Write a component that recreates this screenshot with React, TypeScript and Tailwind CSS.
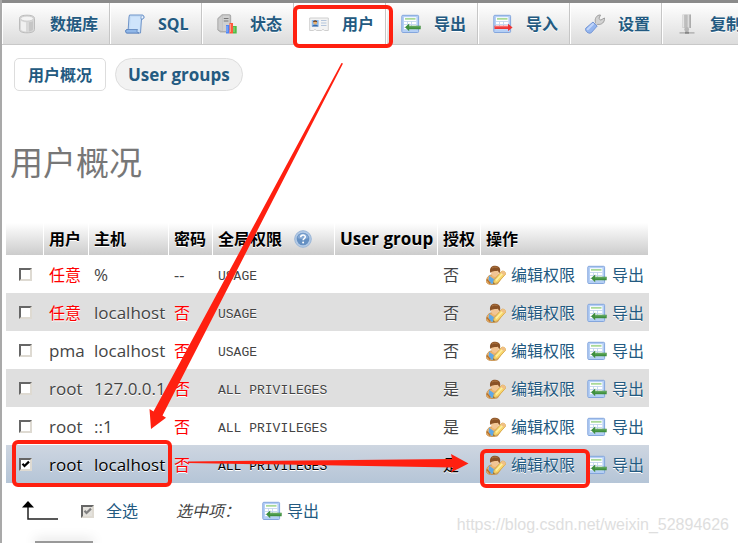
import type { ReactNode } from 'react'
import clsx from 'clsx'

const DatabaseIcon = () => (
  <svg viewBox="0 0 20 20" className="size-5 shrink-0">
    <path d="M2.500 4.500C2.500 2 6 1.200 10 1.200s7.500.8 7.500 3.300v11c0 2.500-3.500 3.300-7.500 3.300s-7.500-.8-7.500-3.300z" fill="#d8d8d8" stroke="#bcbcbc" />
    <path d="M4 7c2 1 4 1.200 5 1.200V17.500C7 17.400 4.800 17 4 15.500z" fill="#f0f0f0" />
    <path d="M12 8.200c2-.2 3.500-.6 4-1.200v8.500c-.5 1-2.200 1.700-4 1.900z" fill="#c6c6c6" />
    <ellipse cx="10" cy="4.600" rx="6.300" ry="2.500" fill="#f4f4f4" stroke="#c6c6c6" strokeWidth=".7" />
  </svg>
)

const SqlIcon = () => (
  <svg viewBox="0 0 20 20" className="size-5 shrink-0">
    <path d="M4.500 1h13c1.700 0 2.200 3.800.3 4h-1.300l-1 14H2C0 19 .2 15.500 2 15.500h1.200L4 3z" fill="#c5ddf7" stroke="#6f94c8" />
    <path d="M6 3h9.500l-1 12.500H5z" fill="#cfe4fb" />
    <path d="M2 15.500h10.500c-1 1.500-.5 3.500 1.500 3.500H2C.2 19 .2 15.500 2 15.500z" fill="#90b7e8" stroke="#5b82bb" strokeWidth=".8" />
    <path d="M16 5V3c0-1.500 2.500-2 2.800 0 .2 1.500-.8 2-2.800 2z" fill="#eef6ff" stroke="#6f94c8" strokeWidth=".8" />
  </svg>
)

const StatusIcon = () => (
  <svg viewBox="0 0 20 20" className="size-5 shrink-0">
    <path d="M.8 4.500L5 .7h7.500c.8 0 1.200.5 1.200 1.300v13L9 18H3.500L.8 16z" fill="#b8b8b8" stroke="#9a9a9a" strokeWidth=".7" />
    <path d="M5.500 1.500h7v12.500l-3 3h-4z" fill="#d0d0d0" />
    <path d="M6.800 4.500h4.700M6.800 7h4.700" stroke="#777" strokeWidth="1.200" />
    <path d="M1.500 5L5 2v15l-3.500-1.500z" fill="#cccccc" />
    <path d="M9 11h3.500v8.500H9z" fill="#4f86f5" />
    <path d="M12.500 9H16v10.500h-3.500z" fill="#ff593c" />
    <path d="M16 12h3.700v7.500H16z" fill="#51bd46" />
    <path d="M10 12v6M13.500 10v8M17 13v5" stroke="#fff" strokeOpacity=".4" />
  </svg>
)

const UsersIcon = () => (
  <svg viewBox="0 0 20 20" className="size-5 shrink-0">
    <path d="M.7 4h18.600v12.500h-3.800L14 15.300l-1.500 1.200h-5L6 15.300l-1.500 1.200H.7z" fill="#f3f3f3" stroke="#cfcfcf" />
    <path d="M2.700 6h7v6.500h-7z" fill="#8bbcf1" />
    <circle cx="6.200" cy="8.800" r="1.900" fill="#e9b16f" />
    <path d="M4 8.300c-.2-2.800 4.500-2.800 4.300 0-1.200-.8-3-.8-4.300 0z" fill="#70411f" />
    <path d="M3 12.500c.5-2.200 6-2.200 6.400 0z" fill="#3868a8" />
    <path d="M12 6.500h5.500M12 9h5.500M12 11.500h5.500" stroke="#b4c5dc" strokeWidth="1.200" />
  </svg>
)

const SheetIcon = ({ children }: { children: ReactNode }) => (
  <svg viewBox="0 0 20 20" className="size-5 shrink-0">
    <rect x=".8" y="1.300" width="16.800" height="17.200" rx="1" fill="#b4cff5" stroke="#84a6dd" />
    <path d="M3 3.200h12.400v12H3z" fill="#fff" />
    <path d="M4 4.900h10.500" stroke="#8ccc75" strokeWidth="1.300" />
    <path d="M3 7.500h12.400M3 10.500h12.400M3 13.500h12.400M6.500 7v8.200M10.500 7v8.200" stroke="#c3d6ee" strokeWidth=".9" />
    {children}
  </svg>
)

const ExportIcon = () => (
  <SheetIcon>
    <path d="M4 13.300l4.200-3.800v2.200h11.500v3.500H8.200v2z" fill="#3f8f3e" />
    <path d="M8 12.800h11" stroke="#74b56f" strokeWidth=".9" />
  </SheetIcon>
)

const ImportIcon = () => (
  <SheetIcon>
    <path d="M1.500 11.700h13.500V9.700l4.600 3.700-4.600 3.600v-2H1.500z" fill="#ee3434" />
    <path d="M2 12.700h13" stroke="#ff8c8c" strokeWidth=".8" />
  </SheetIcon>
)

const SettingsIcon = () => (
  <svg viewBox="0 0 20 20" className="size-5 shrink-0">
    <path d="M10.500 8.500C9.300 5 11.500.7 15.500 1l-1.500 3.200 1.500 2L19.500 4c.5 4-3 7.200-6.800 6.300l-2 2-2-2z" fill="#d2d2d2" stroke="#969696" strokeWidth=".9" />
    <path d="M8 8l4.200 4-6 6.800C3.400 20.300-.3 17 .7 14.300z" fill="#94b5ee" stroke="#6b8fd2" strokeWidth=".9" />
    <path d="M8 10l-5.300 5.300" stroke="#c1d5fa" strokeWidth="2" strokeLinecap="round" />
  </svg>
)

const ReplicationIcon = () => (
  <svg viewBox="0 0 20 20" className="size-5 shrink-0">
    <path d="M5.500.5h3v13.500h-3zM9.500.5h4v13.500h-4z" fill="#c2c2c2" />
    <path d="M6.500.5v13M11.300.5v13.500" stroke="#e4e4e4" />
    <path d="M9 .5v13M13.300.5v13.500" stroke="#a2a2a2" />
    <circle cx="9.700" cy="15.500" r="2.400" fill="#b6b6b6" />
    <path d="M2.500 18h15v1.700h-15z" fill="#b8b8b8" />
    <path d="M8 17.700h4v2H8z" fill="#858585" />
  </svg>
)

const EditUserIcon = () => (
  <svg viewBox="0 0 20 20" className="size-5 shrink-0">
    <path d="M.5 16.500C.5 12.500 2.500 10 6.500 9.700h5c2 .5 3 2 3.500 4l-3.500 5.200C7 20 .5 20 .5 16.500z" fill="#eeb36b" stroke="#c08a48" strokeWidth=".8" />
    <path d="M3.200 10.700l4.800 3.600 4-3.300 1.500 3-3.500 4.800H5L2.500 15z" fill="#5fa8e6" />
    <path d="M.8 14.500l3.500 4" stroke="#b5702a" strokeWidth="1.300" />
    <path d="M5 7c0 6.500 8 6.500 8 0V5.500H5z" fill="#f2c594" />
    <path d="M4.300 8C2.900 2 6.500.6 9.300.7c4.700.2 5.700 3.700 4.500 7.300-1.300-.5-1.800-2.200-1.800-2.200C9.500 6.300 5.800 5.800 4.300 8z" fill="#8a5226" />
    <path d="M6 3c1.500-1.200 4-1.200 5.500-.4" fill="none" stroke="#b27a45" />
    <path d="M7.200 18.900l1-4.200 7.300-8.200c1.500-1.300 5 .9 3.900 2.900l-7.600 8.300z" fill="#f7d76d" stroke="#d9a648" strokeWidth=".9" />
    <path d="M10 15.500l6.500-7" stroke="#fff0a3" strokeWidth="1.500" />
    <path d="M15.700 6.500c1.500-1.300 4.700.8 3.700 2.600l-1.200 1.300-3.600-2.800z" fill="#f0bf86" />
    <path d="M7.200 18.900l.5-1.600 1.100 1z" fill="#564227" />
  </svg>
)

const HelpIcon = () => (
  <svg viewBox="0 0 18 18" className="size-[18px] shrink-0">
    <circle cx="9" cy="9" r="8.300" fill="#b3cae6" stroke="#9ab6d8" />
    <circle cx="9" cy="9" r="6.300" fill="#6590c2" />
    <path d="M3.500 8a5.600 5.600 0 0 1 11 0c-3 1.500-8 1.500-11 0z" fill="#86a9d4" />
    <path d="M6.700 7.200c0-3 4.800-2.900 4.600-.2-.1 1.600-2.200 1.500-2.200 3.300" fill="none" stroke="#fff" strokeWidth="1.500" />
    <circle cx="9.100" cy="12.500" r="1" fill="#fff" />
  </svg>
)

const navItems = [
  { label: '数据库', icon: <DatabaseIcon /> },
  { label: 'SQL', icon: <SqlIcon /> },
  { label: '状态', icon: <StatusIcon /> },
  { label: '用户', icon: <UsersIcon />, active: true },
  { label: '导出', icon: <ExportIcon /> },
  { label: '导入', icon: <ImportIcon /> },
  { label: '设置', icon: <SettingsIcon /> },
  { label: '复制', icon: <ReplicationIcon /> },
]

const users = [
  { user: '任意', any: true, host: '%', password: '--', privileges: 'USAGE', grant: '否' },
  { user: '任意', any: true, host: 'localhost', password: '否', privileges: 'USAGE', grant: '否' },
  { user: 'pma', host: 'localhost', password: '否', privileges: 'USAGE', grant: '否' },
  { user: 'root', host: '127.0.0.1', password: '否', privileges: 'ALL PRIVILEGES', grant: '是' },
  { user: 'root', host: '::1', password: '否', privileges: 'ALL PRIVILEGES', grant: '是' },
  { user: 'root', host: 'localhost', password: '否', privileges: 'ALL PRIVILEGES', grant: '是', selected: true },
]

const Checkbox = ({ id, label, checked, muted }: { id: string; label?: string; checked?: boolean; muted?: boolean }) => (
  <span className="relative block size-[13px] shrink-0">
    <input
      id={id}
      type="checkbox"
      defaultChecked={checked}
      aria-label={label}
      className={clsx(
        'peer block size-[13px] appearance-none border-2 border-t-[#666] border-r-[#dedad2] border-b-[#dedad2] border-l-[#666]',
        muted ? 'bg-[#e4e2dd]' : 'bg-white',
      )}
    />
    <svg viewBox="0 0 13 13" className="pointer-events-none absolute inset-0 hidden size-[13px] peer-checked:block">
      <path d="M3.500 5.800l2 2.200L10 3.600" fill="none" stroke={muted ? '#808080' : '#000'} strokeWidth="2.200" />
    </svg>
  </span>
)

const Nav = () => (
  <nav className="overflow-hidden border-t-3 border-[#8b8b8b]">
    <ul className="flex h-[42px] border-b border-[#c8c8c8] bg-linear-to-b from-white to-[#dcdcdc]">
      {navItems.map((item) => (
        <li key={item.label} className="shrink-0">
          <a
            href="#"
            className={clsx(
              'flex h-full min-w-[92px] items-center gap-[13px] border-r border-[#c6c6c6] pr-[11px] pl-[15px] font-bold whitespace-nowrap text-[#235a81] shadow-[inset_1px_0_0_#fff] [text-shadow:0_1px_0_#fff]',
              item.active && 'bg-white',
            )}
          >
            {item.icon}
            {item.label}
          </a>
        </li>
      ))}
    </ul>
  </nav>
)

const UsersTable = () => (
  <table className="w-[643px] table-fixed border-separate border-spacing-0 text-left text-[#444] [text-shadow:0_1px_0_#fff]">
    <colgroup>
      <col className="w-[38px]" />
      <col className="w-[45px]" />
      <col className="w-[80px]" />
      <col className="w-[44px]" />
      <col className="w-[122px]" />
      <col className="w-[103px]" />
      <col className="w-[43px]" />
      <col className="w-[168px]" />
    </colgroup>
    <thead>
      <tr className="h-8 whitespace-nowrap text-black *:border-r *:border-white *:bg-linear-to-b *:from-white *:to-[#ccc] *:px-[5px]">
        <th></th>
        <th>用户</th>
        <th>主机</th>
        <th>密码</th>
        <th>
          <span className="flex items-center gap-3">
            全局权限 <HelpIcon />
          </span>
        </th>
        <th className="text-[17px]">User group</th>
        <th>授权</th>
        <th>操作</th>
      </tr>
    </thead>
    <tbody>
      {users.map((row, i) => (
        <tr
          key={i}
          className={clsx(
            'h-[38px] whitespace-nowrap *:pt-px *:pl-[5px]',
            row.selected && 'text-black *:bg-linear-to-b *:from-[#ced6e1] *:to-[#b5c5d7]',
            !row.selected && i % 2 === 1 && 'bg-[#dfdfdf]',
          )}
        >
          <td>
            <div className="pl-2">
              <Checkbox id={`user-${i}`} label={`${row.user}@${row.host}`} checked={row.selected} />
            </div>
          </td>
          <td className={row.any ? 'text-[#f00]' : 'text-[17px]'}>{row.user}</td>
          <td className="text-[17px]">{row.host}</td>
          <td className={clsx(row.password === '否' && 'text-[#f00]')}>{row.password}</td>
          <td>
            <code className="block pt-1 font-['Liberation_Mono',monospace] text-[13px]">{row.privileges}</code>
          </td>
          <td></td>
          <td>{row.grant}</td>
          <td>
            <div className="flex gap-3 text-[#235a81]">
              <a href="#" className="flex items-center gap-[5px]">
                <EditUserIcon />
                编辑权限
              </a>
              <a href="#" className="flex items-center gap-[5px]">
                <ExportIcon />
                导出
              </a>
            </div>
          </td>
        </tr>
      ))}
    </tbody>
  </table>
)

const Annotations = () => (
  <div className="pointer-events-none absolute inset-y-0 right-0 -left-0.5">
    <div className="absolute top-[5px] left-[293px] h-[43px] w-[100px] rounded-md border-4 border-[#ff2010]" />
    <div className="absolute top-[440px] left-[12px] h-[47px] w-[160px] rounded-md border-4 border-[#ff2010]" />
    <div className="absolute top-[449px] left-[480px] h-[39px] w-[110px] rounded-md border-4 border-[#ff2010]" />
    <svg width="738" height="543" viewBox="0 0 738 543" className="absolute top-0 left-0" fill="#ff2010">
      <path d="M341.500 63L343 63.500L162.500 415.500L166 417.700L151 429L149.500 409L153.500 411.500Z" />
      <path d="M188 461.500L452 459L451 454L468.500 463.500L451 472.500L453 467.500L188 463Z" />
    </svg>
  </div>
)

const App = () => {
  return (
    <div className="relative min-h-screen overflow-hidden border-l-2 border-[#a9a9a9] bg-white font-['Open_Sans','Noto_Sans_CJK_SC',sans-serif] text-base leading-6">
      <Nav />

      <div className="mt-[13px] ml-3 flex gap-[9px] font-bold text-[#235a81]">
        <a href="#" className="flex h-[33px] items-center rounded-[5px] border border-[#ddd] px-[13px]">
          用户概况
        </a>
        <a href="#" className="flex h-[33px] items-center rounded-full border border-[#ddd] bg-[#f2f2f2] px-3 text-[17px]">
          User groups
        </a>
      </div>

      <main className="ml-1">
        <h2 className="mt-[52px] pl-1 text-[33px] leading-10 text-[#777]">用户概况</h2>
        <div className="mt-10">
          <UsersTable />
        </div>

        <div className="mt-3 flex h-8 items-center text-[#235a81]">
          <svg viewBox="0 0 38 22" className="ml-4 h-[22px] w-[38px]">
            <path d="M6 3v16h30" fill="none" stroke="#222" strokeWidth="1.500" />
            <path d="M0 7.500L6 1l6 6.500z" fill="#000" />
          </svg>
          <div className="ml-[21px] flex items-center gap-3">
            <Checkbox id="check-all" checked muted />
            <label htmlFor="check-all">全选</label>
          </div>
          <em className="ml-[38px] text-[#444]">选中项：</em>
          <button type="button" className="ml-[22px] flex items-center gap-[5px]">
            <ExportIcon />
            导出
          </button>
        </div>
      </main>

      <div className="mt-[14px] ml-[33px] h-0.5 w-[58px] bg-[#999] shadow-[0_0_12px_#999]" />

      <Annotations />
      <p className="absolute right-[9px] bottom-1.5 font-['Liberation_Sans',sans-serif] text-[#dedede]">
        https://blog.csdn.net/weixin_52894626
      </p>
    </div>
  )
}

export default App
